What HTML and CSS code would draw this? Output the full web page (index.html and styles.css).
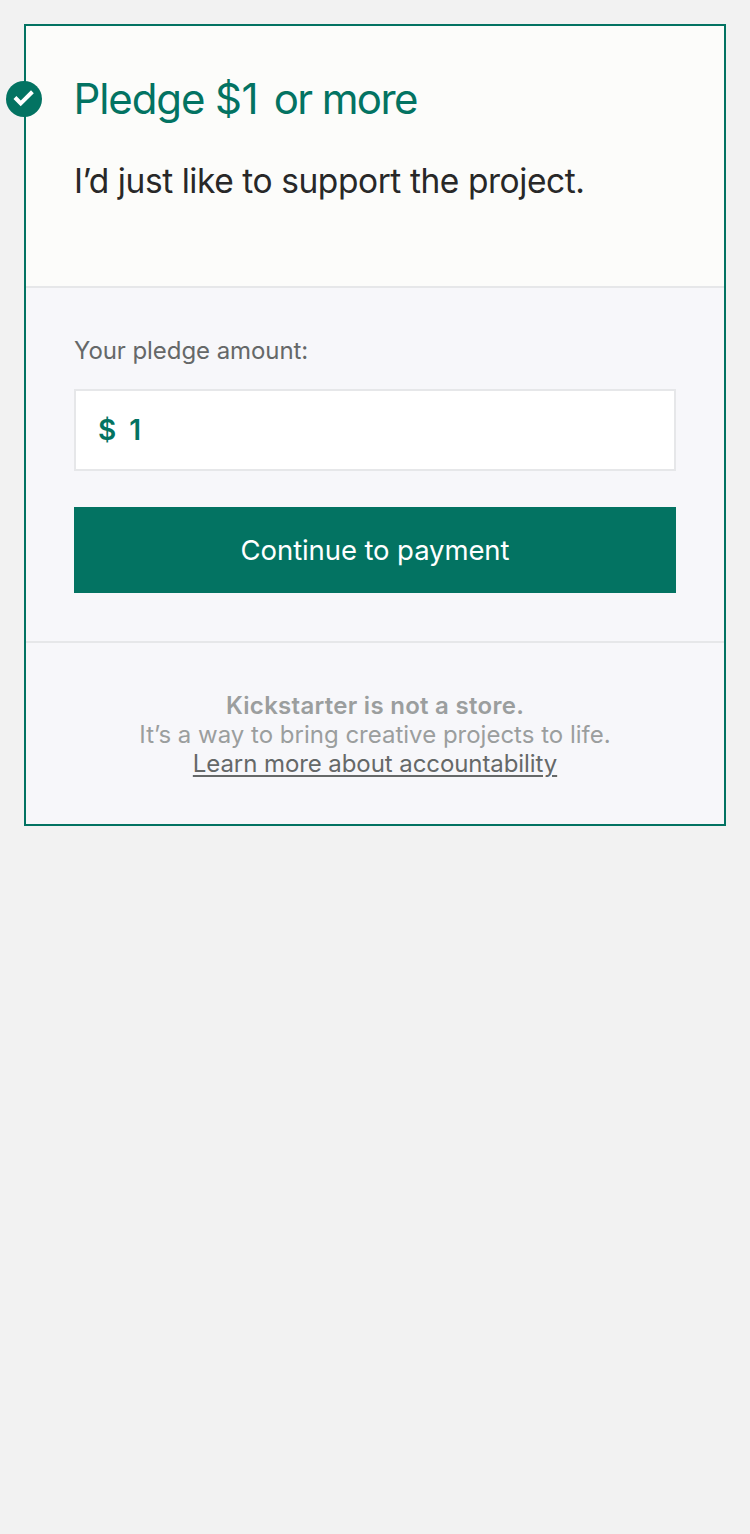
FILE: index.html
```html
<!DOCTYPE html>
<html lang="en">
<head>
<meta charset="utf-8">
<title>Pledge</title>
<link rel="stylesheet" href="styles.css">
</head>
<body>
<main class="card">
  <span class="badge"><svg viewBox="0 0 36 36" width="36" height="36"><circle cx="18" cy="18" r="18" fill="#037362"/><path d="M7.5 18 L10.4 15.1 L14.8 19.5 L25 9.3 L27.8 12.2 L14.7 25.3 Z" fill="#fff"/></svg></span>
  <section class="intro">
    <h1 class="title">Pledge <span class="amount">$1</span> <span class="suffix">or more</span></h1>
    <p class="desc">I’d just like to support the project.</p>
  </section>
  <section class="form">
    <label class="label">Your pledge amount:</label>
    <div class="field"><span class="currency">$</span><span class="value">1</span></div>
    <button class="submit">Continue to payment</button>
  </section>
  <footer class="note">
    <strong class="note-title">Kickstarter is not a store.</strong>
    <span class="note-text">It’s a way to bring creative projects to life.</span>
    <a class="note-link">Learn more about accountability</a>
  </footer>
</main>
</body>
</html>
```
FILE: styles.css
```css
* { box-sizing: border-box; }
body {
  margin: 0;
  padding: 24px;
  min-height: 1534px;
  background: #f2f2f2;
  font-family: Inter, "Liberation Sans", sans-serif;
  font-weight: 370;
}
.card {
  position: relative;
  height: 802px;
  border: 2px solid #037362;
  background: #f7f7fa;
}
.badge { position: absolute; left: -20px; top: 55px; width: 36px; height: 36px; }
.badge svg { display: block; }
.intro {
  height: 262px;
  padding: 47px 48px;
  background: #fcfcfa;
  border-bottom: 2px solid #e6e7e9;
}
.title { margin: 0 0 0 -0.5px; font-size: 42px; line-height: 52px; font-weight: 370; letter-spacing: -1.1px; color: #037362; white-space: nowrap; }
.amount { margin-right: 5px; letter-spacing: -0.6px; }
.suffix { letter-spacing: -1.6px; }
.desc { margin: 32px 0 0; font-size: 33.5px; line-height: 48px; letter-spacing: -0.43px; color: #282828; white-space: nowrap; }
.form { height: 355px; padding: 48px; border-bottom: 2px solid #e6e7e9; }
.label { display: block; font-size: 24px; line-height: 30px; letter-spacing: -0.07px; color: #656868; }
.field {
  display: flex;
  align-items: center;
  gap: 13px;
  height: 82px;
  margin-top: 23px;
  padding-left: 22px;
  border: 2px solid #e6e7e9;
  background: #fff;
  color: #037362;
  font-size: 28px;
  font-weight: 600;
}
.submit {
  display: block;
  width: 100%;
  height: 86px;
  margin-top: 36px;
  padding: 0 0 1px;
  border: 0;
  background: #037362;
  color: #fff;
  font: 370 27.5px/34px Inter, "Liberation Sans", sans-serif;
  letter-spacing: -0.1px;
}
.note { display: flex; flex-direction: column; align-items: center; padding-top: 48px; font-size: 24px; line-height: 29px; color: #9b9e9e; white-space: nowrap; }
.note-title { font-weight: 600; letter-spacing: 0.28px; }
.note-link { letter-spacing: -0.08px; color: #656868; text-decoration: underline 2px; text-underline-offset: 3px; }
```
